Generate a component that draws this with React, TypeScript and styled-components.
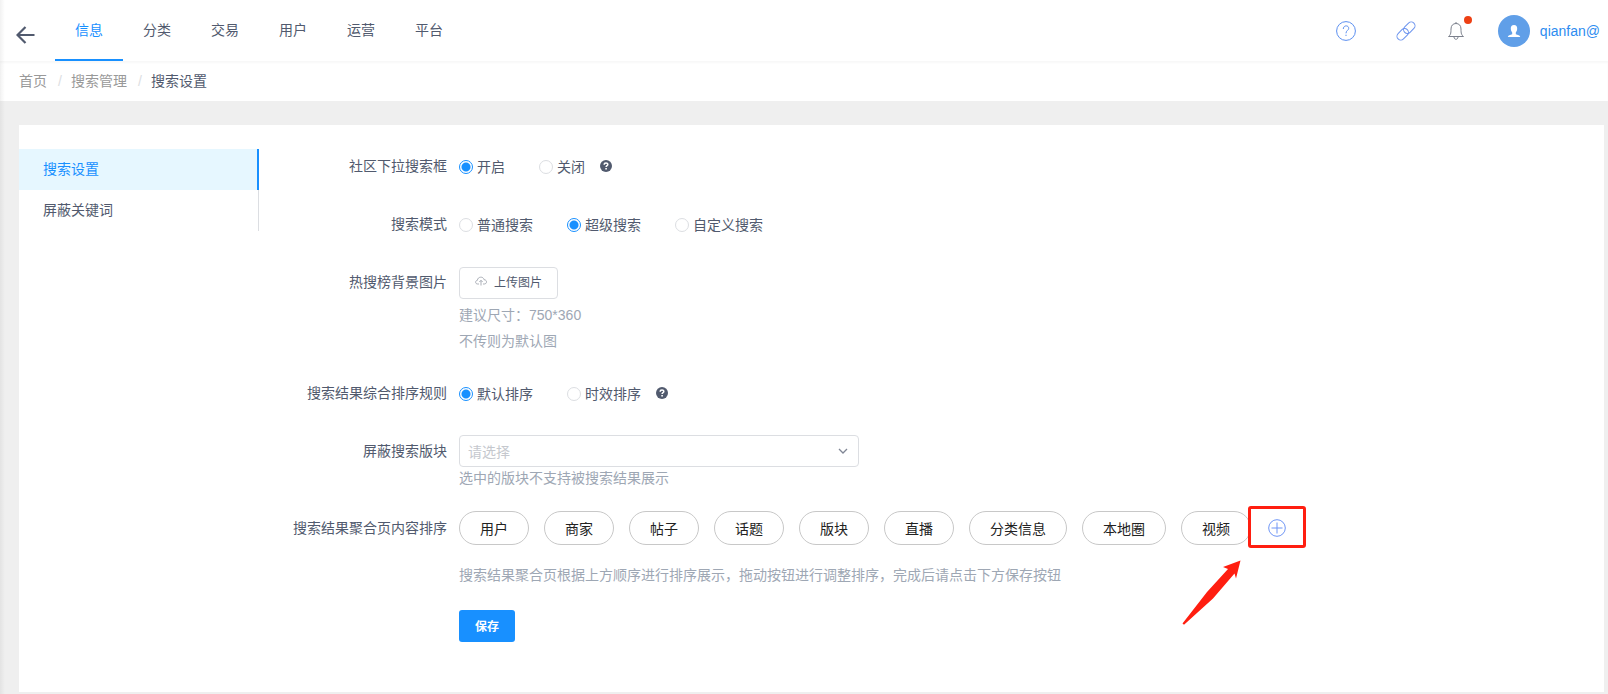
import React, { useState } from "react";
import styled, { createGlobalStyle } from "styled-components";

const GlobalStyle = createGlobalStyle`
  *, *::before, *::after { box-sizing: border-box; }
  html, body, #root { height: 100%; }
  body {
    margin: 0;
    background: #efefef;
    color: #515a6e;
    font: 14px/22px "Liberation Sans", "Noto Sans CJK SC", sans-serif;
  }
  button, select, input { font-family: inherit; }
`;

const Page = styled.div`
  position: relative;
  display: flex;
  flex-direction: column;
  min-height: 100%;
`;

const SiderShadow = styled.div`
  position: absolute;
  inset: 0 auto 0 0;
  width: 5px;
  background: linear-gradient(to right, rgba(0, 0, 0, 0.05), rgba(0, 0, 0, 0));
  pointer-events: none;
`;

const Header = styled.header`
  display: flex;
  align-items: stretch;
  height: 61px;
  padding: 0 8px 0 16px;
  background: #fff;
`;

const BackButton = styled.button`
  display: flex;
  align-items: center;
  width: 39px;
  padding: 8px 0 0;
  border: 0;
  background: none;
  color: #515a6e;
  cursor: pointer;
`;

const Nav = styled.nav`
  display: flex;
  flex: 1;
`;

const NavLink = styled.a<{ $active?: boolean }>`
  padding: 0 20px;
  line-height: 61px;
  text-decoration: none;
  color: ${(p) => (p.$active ? "#1890ff" : "#515a6e")};
  box-shadow: ${(p) => (p.$active ? "inset 0 -2px #1890ff" : "none")};
`;

const Tools = styled.div`
  display: flex;
  align-items: center;
`;

const IconButton = styled.button<{ $gap: number }>`
  position: relative;
  display: flex;
  margin: 0 ${(p) => p.$gap}px 0 0;
  padding: 0;
  border: 0;
  background: none;
  cursor: pointer;
`;

const Dot = styled.span`
  position: absolute;
  top: -5px;
  right: -8px;
  width: 8px;
  height: 8px;
  border-radius: 50%;
  background: #ed4014;
`;

const Account = styled.a`
  display: flex;
  align-items: center;
  gap: 10px;
  color: #2d8cf0;
  text-decoration: none;
`;

const Crumbs = styled.ol`
  display: flex;
  height: 40px;
  margin: 0;
  padding: 0 19px;
  background: #fff;
  box-shadow: inset 0 2px 2px #f8f8f8;
  line-height: 40px;
  list-style: none;
`;

const Crumb = styled.li`
  color: #515a6e;
  & + &::before {
    content: "/";
    display: inline-block;
    width: 24px;
    padding-left: 11px;
    color: #dcdee2;
  }
`;

const CrumbLink = styled.a`
  color: #999;
  text-decoration: none;
`;

const Panel = styled.main`
  display: flex;
  flex: 1;
  align-items: flex-start;
  margin: 24px 4px 2px 19px;
  padding: 24px 0 32px;
  background: #fff;
`;

const SideMenu = styled.nav`
  display: flex;
  flex: none;
  flex-direction: column;
  width: 240px;
`;

const SideLink = styled.a<{ $active?: boolean }>`
  padding: 0 24px;
  line-height: 41px;
  text-decoration: none;
  color: ${(p) => (p.$active ? "#1890ff" : "#515a6e")};
  background: ${(p) => (p.$active ? "#e6f7ff" : "transparent")};
  border-right: ${(p) => (p.$active ? "2px solid #1890ff" : "1px solid #dcdee2")};
`;

const Form = styled.form`
  display: flex;
  flex: 1;
  flex-direction: column;
  gap: 22px;
`;

const Row = styled.div`
  display: flex;
`;

const Label = styled.div`
  flex: none;
  width: 200px;
  padding-right: 12px;
  line-height: 34px;
  text-align: right;
`;

const Field = styled.div`
  flex: 1;
  min-width: 0;
`;

const RadioLine = styled.div`
  display: flex;
  align-items: center;
  height: 36px;
`;

const RadioLabel = styled.label`
  display: flex;
  align-items: center;
  gap: 4px;
  margin-right: 34px;
  cursor: pointer;
  &:last-of-type { margin-right: 15px; }
`;

const Radio = styled.input`
  appearance: none;
  width: 14px;
  height: 14px;
  margin: 0;
  border: 1px solid #dcdee2;
  border-radius: 50%;
  background: #fff;
  &:checked {
    border-color: #1890ff;
    background: radial-gradient(circle, #1890ff 4px, #fff 5px);
  }
`;

const HelpButton = styled.button`
  display: flex;
  padding: 0 0 2px;
  border: 0;
  background: none;
  cursor: pointer;
`;

const UploadButton = styled.button`
  display: flex;
  align-items: center;
  gap: 7px;
  height: 32px;
  margin-top: 2px;
  padding: 0 15px 4px;
  border: 1px solid #dcdee2;
  border-radius: 4px;
  background: #fff;
  color: #515a6e;
  font-size: 12px;
  cursor: pointer;
`;

const Hint = styled.p<{ $space?: number; $line?: number }>`
  margin: ${(p) => p.$space ?? 0}px 0 0;
  line-height: ${(p) => p.$line ?? 22}px;
  color: #9ea7b4;
`;

const SelectBox = styled.div`
  display: grid;
  align-items: center;
  max-width: 400px;
  margin-top: 1px;
  & > * { grid-area: 1 / 1; }
  & > svg { justify-self: end; margin-right: 11px; pointer-events: none; }
`;

const Select = styled.select`
  appearance: none;
  width: 100%;
  height: 32px;
  padding: 2px 32px 0 8px;
  border: 1px solid #dcdee2;
  border-radius: 4px;
  background: #fff;
  color: #c5c8ce;
  font-size: 14px;
`;

const Chips = styled.div`
  display: flex;
  flex-wrap: wrap;
  align-items: center;
  gap: 15px;
`;

const Chip = styled.button`
  height: 34px;
  padding: 0 20px 1px;
  border: 1px solid #c8c8c8;
  border-radius: 17px;
  background: #fff;
  color: #222;
  font-size: 14px;
  cursor: grab;
`;

const AddButton = styled.button`
  position: relative;
  display: flex;
  margin-left: 2px;
  padding: 0;
  border: 0;
  background: none;
  cursor: pointer;
`;

const Highlight = styled.span`
  position: absolute;
  top: -13px;
  left: -20px;
  width: 58px;
  height: 42px;
  border: 3px solid #ff1e10;
  border-radius: 3px;
  background: #fff;
`;

const AddIcon = styled.svg`
  position: relative;
`;

const Pointer = styled.svg`
  position: absolute;
  top: 41px;
  left: -86px;
  pointer-events: none;
`;

const SaveButton = styled.button`
  height: 32px;
  padding: 0 16px 2px;
  border: 0;
  border-radius: 3px;
  background: #1890ff;
  color: #fff;
  font-size: 12px;
  font-weight: 700;
  cursor: pointer;
`;

const NAV = ["信息", "分类", "交易", "用户", "运营", "平台"];
const CHIPS = ["用户", "商家", "帖子", "话题", "版块", "直播", "分类信息", "本地圈", "视频"];

function HelpMark() {
  return (
    <HelpButton type="button" aria-label="帮助">
      <svg width="12" height="12" viewBox="0 0 12 12" fill="none">
        <circle cx="6" cy="6" r="6" fill="#515a6e" />
        <path d="M4.2 4.7C4.2 2.4 7.9 2.5 7.8 4.6C7.7 5.7 6.1 5.7 6.1 7" stroke="#fff" strokeWidth="1.5" />
        <path d="M5.3 8h1.6v1.4H5.3z" fill="#fff" />
      </svg>
    </HelpButton>
  );
}

function RadioField(props: { name: string; label: string; options: string[]; initial: string; help?: boolean }) {
  const [value, setValue] = useState(props.initial);
  return (
    <Row role="radiogroup" aria-labelledby={props.name}>
      <Label id={props.name}>{props.label}</Label>
      <Field>
        <RadioLine>
          {props.options.map((o) => (
            <RadioLabel key={o}>
              <Radio type="radio" name={props.name} checked={value === o} onChange={() => setValue(o)} />
              {o}
            </RadioLabel>
          ))}
          {props.help && <HelpMark />}
        </RadioLine>
      </Field>
    </Row>
  );
}

export default function App() {
  return (
    <Page>
      <GlobalStyle />
      <Header>
        <BackButton type="button" aria-label="返回">
          <svg width="19" height="18" viewBox="0 0 19 18" fill="none" stroke="currentColor" strokeWidth="2.2">
            <path d="M9.5 1L1.5 9l8 8M1.5 9H18.5" />
          </svg>
        </BackButton>
        <Nav>
          {NAV.map((n, i) => (
            <NavLink key={n} href="#" $active={i === 0}>{n}</NavLink>
          ))}
        </Nav>
        <Tools>
          <IconButton type="button" aria-label="帮助中心" $gap={40}>
            <svg width="20" height="20" viewBox="0 0 20 20" fill="none" stroke="#5b8ff0">
              <circle cx="10" cy="10" r="9.4" />
              <path d="M7.3 8c0-4.2 5.6-3.9 5.4-.6C12.6 9.4 10 9.5 10 12.3" />
              <path d="M10 13.7v1.3" />
            </svg>
          </IconButton>
          <IconButton type="button" aria-label="链接" $gap={32}>
            <svg width="20" height="20" viewBox="0 0 20 20" fill="none" stroke="#6b93ee">
              <rect x="-6.5" y="-3.8" width="13" height="7.6" rx="3.8" transform="translate(13.3 6.7) rotate(-45)" />
              <rect x="-6.5" y="-3.8" width="13" height="7.6" rx="3.8" transform="translate(6.7 13.3) rotate(-45)" />
            </svg>
          </IconButton>
          <IconButton type="button" aria-label="通知" $gap={34}>
            <svg width="16" height="20" viewBox="0 0 16 20" fill="none" stroke="#7b808c">
              <path d="M.5 15.5C2.5 14 3 12.5 3 8c0-3.5 2-5.5 5-5.5S13 4.5 13 8c0 4.5.5 6 2.500 7.500zM8 2.500V1M6 16c0 3 4 3 4 0" />
            </svg>
            <Dot />
          </IconButton>
          <Account href="#">
            <svg width="32" height="32" viewBox="0 0 32 32">
              <circle cx="16" cy="16" r="16" fill="#609fe8" />
              <path d="M16 10c2.3 0 3.3 1.6 3.2 3.8-.1 1.800-.8 2.800-1.400 3.700v1.700c1.800.5 4.400 1 4.400 2.800H9.800c0-1.800 2.600-2.300 4.400-2.800v-1.700c-.6-.9-1.300-1.900-1.400-3.700C12.700 11.600 13.700 10 16 10z" fill="#fff" />
            </svg>
            qianfan@
          </Account>
        </Tools>
      </Header>
      <Crumbs>
        <Crumb><CrumbLink href="#">首页</CrumbLink></Crumb>
        <Crumb><CrumbLink href="#">搜索管理</CrumbLink></Crumb>
        <Crumb>搜索设置</Crumb>
      </Crumbs>
      <Panel>
        <SideMenu>
          <SideLink href="#" $active>搜索设置</SideLink>
          <SideLink href="#">屏蔽关键词</SideLink>
        </SideMenu>
        <Form onSubmit={(e) => e.preventDefault()}>
          <RadioField name="dropdown" label="社区下拉搜索框" options={["开启", "关闭"]} initial="开启" help />
          <RadioField name="mode" label="搜索模式" options={["普通搜索", "超级搜索", "自定义搜索"]} initial="超级搜索" />
          <Row>
            <Label>热搜榜背景图片</Label>
            <Field>
              <UploadButton type="button">
                <svg width="12" height="12" viewBox="0 0 12 12" fill="none" stroke="#8b909c" strokeWidth=".7">
                  <path d="M4 9H2.6C0 9 0 5.5 2.4 5.3 2.5 1.5 8.5 1 9 4.7c3.3 0 3.3 4.3.3 4.300H8M6 10.500V5.500M4.300 7L6 5.300 7.700 7" />
                </svg>
                上传图片
              </UploadButton>
              <Hint $space={3} $line={26}>建议尺寸：750*360</Hint>
              <Hint $line={26}>不传则为默认图</Hint>
            </Field>
          </Row>
          <RadioField name="order" label="搜索结果综合排序规则" options={["默认排序", "时效排序"]} initial="默认排序" help />
          <Row>
            <Label as="label" htmlFor="block">屏蔽搜索版块</Label>
            <Field>
              <SelectBox>
                <Select id="block" defaultValue="">
                  <option value="">请选择</option>
                </Select>
                <svg width="10" height="10" viewBox="0 0 10 10" fill="none" stroke="#808695" strokeWidth="1.3">
                  <path d="M1 3l4 4 4-4" />
                </svg>
              </SelectBox>
              <Hint>选中的版块不支持被搜索结果展示</Hint>
            </Field>
          </Row>
          <Row>
            <Label>搜索结果聚合页内容排序</Label>
            <Field>
              <Chips>
                {CHIPS.map((c) => (
                  <Chip key={c} type="button">{c}</Chip>
                ))}
                <AddButton type="button" aria-label="添加">
                  <Highlight />
                  <AddIcon width="18" height="18" viewBox="0 0 18 18" fill="none" stroke="#6e95f5">
                    <circle cx="9" cy="9" r="8.3" />
                    <path d="M9 3.5v11M3.5 9h11" />
                  </AddIcon>
                  <Pointer width="60" height="66" viewBox="0 0 60 66" fill="#ff1e10">
                    <path d="M58.5 .5L41 7l5 2L25 32Q11 50 .5 63.5l1.5 1.300Q15 53 31 38.500L52.500 13.500l1.500 5z" />
                  </Pointer>
                </AddButton>
              </Chips>
              <Hint $space={17} $line={26}>搜索结果聚合页根据上方顺序进行排序展示，拖动按钮进行调整排序，完成后请点击下方保存按钮</Hint>
            </Field>
          </Row>
          <Row>
            <Label />
            <Field>
              <SaveButton type="submit">保存</SaveButton>
            </Field>
          </Row>
        </Form>
      </Panel>
      <SiderShadow />
    </Page>
  );
}
